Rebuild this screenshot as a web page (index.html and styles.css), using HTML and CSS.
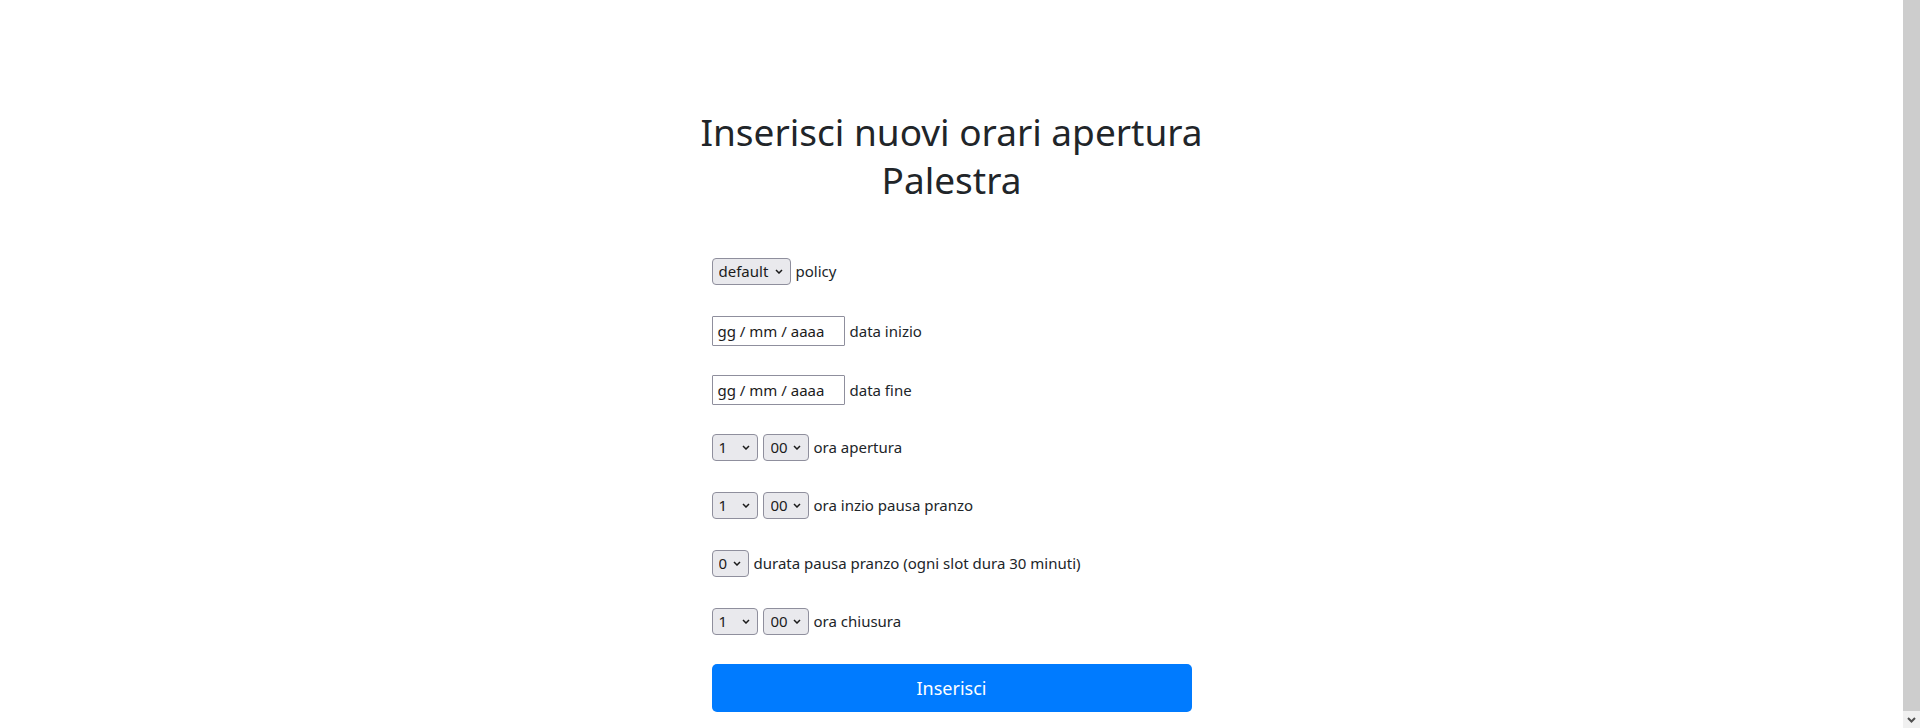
FILE: index.html
```html
<!DOCTYPE html>
<html lang="it">
<head>
<meta charset="utf-8">
<title>Inserisci nuovi orari apertura Palestra</title>
<link rel="stylesheet" href="styles.css">
</head>
<body>
<div class="page">
  <main class="wrap">
    <h1 class="title">Inserisci nuovi orari apertura<br>Palestra</h1>
    <form class="form">
      <div class="field f-policy">
        <span class="sel w-policy"><select><option>default</option></select><svg class="chev" viewBox="0 0 8 5"><path d="M1 1l3 3 3-3"/></svg></span>
        <label>policy</label>
      </div>
      <div class="field f-date1">
        <span class="date">gg / mm / aaaa</span>
        <label>data inizio</label>
      </div>
      <div class="field f-date2">
        <span class="date">gg / mm / aaaa</span>
        <label>data fine</label>
      </div>
      <div class="field f-time">
        <span class="sel w-h"><select><option>1</option></select><svg class="chev" viewBox="0 0 8 5"><path d="M1 1l3 3 3-3"/></svg></span>
        <span class="sel w-m"><select><option>00</option></select><svg class="chev" viewBox="0 0 8 5"><path d="M1 1l3 3 3-3"/></svg></span>
        <label>ora apertura</label>
      </div>
      <div class="field f-time">
        <span class="sel w-h"><select><option>1</option></select><svg class="chev" viewBox="0 0 8 5"><path d="M1 1l3 3 3-3"/></svg></span>
        <span class="sel w-m"><select><option>00</option></select><svg class="chev" viewBox="0 0 8 5"><path d="M1 1l3 3 3-3"/></svg></span>
        <label>ora inzio pausa pranzo</label>
      </div>
      <div class="field f-time">
        <span class="sel w-d"><select><option>0</option></select><svg class="chev" viewBox="0 0 8 5"><path d="M1 1l3 3 3-3"/></svg></span>
        <label>durata pausa pranzo (ogni slot dura 30 minuti)</label>
      </div>
      <div class="field f-time">
        <span class="sel w-h"><select><option>1</option></select><svg class="chev" viewBox="0 0 8 5"><path d="M1 1l3 3 3-3"/></svg></span>
        <span class="sel w-m"><select><option>00</option></select><svg class="chev" viewBox="0 0 8 5"><path d="M1 1l3 3 3-3"/></svg></span>
        <label>ora chiusura</label>
      </div>
      <button type="button" class="btn">Inserisci</button>
    </form>
  </main>
</div>
<div class="scrollbar">
  <div class="thumb"></div>
  <div class="arrow"><svg viewBox="0 0 9 6"><path d="M1 1l3.5 3.5L8 1"/></svg></div>
</div>
</body>
</html>
```
FILE: styles.css
```css
html, body {
  margin: 0;
  padding: 0;
  background: #fff;
  overflow: hidden;
}
body {
  font-family: "Noto Sans", "Open Sans", sans-serif;
  color: #212529;
  font-size: 15px;
  line-height: 1.5;
}
.page {
  width: calc(100% - 17px);
  height: 728px;
}
.wrap {
  width: 480px;
  margin: 0 auto;
  padding-top: 108px;
}
.title {
  margin: 0 -60px;
  font-size: 37px;
  font-weight: 400;
  line-height: 48px;
  text-align: center;
}
.form {
  margin-top: 52px;
  display: flex;
  flex-direction: column;
}
.field {
  height: 30px;
  display: flex;
  align-items: center;
  gap: 5px;
  margin-bottom: 28px;
}
.f-policy { margin-bottom: 30px; }
.f-date1 { margin-bottom: 29px; }
.f-date2 { margin-bottom: 27px; }
.field label {
  font-size: 15px;
  line-height: 24px;
}
.sel {
  position: relative;
  display: block;
  height: 27px;
}
.sel select {
  appearance: none;
  -webkit-appearance: none;
  box-sizing: border-box;
  width: 100%;
  height: 27px;
  margin: 0;
  padding: 0 0 0 6px;
  border: 1px solid #8f8f9d;
  border-radius: 4px;
  background: #e9e9ed;
  color: #1b1b1b;
  font: 15px "Noto Sans", sans-serif;
  line-height: 25px;
}
.chev {
  position: absolute;
  right: 8px;
  top: 11px;
  width: 8px;
  height: 5px;
  fill: none;
  stroke: #1b1b1b;
  stroke-width: 1.5;
}
.w-policy { width: 79px; }
.w-h { width: 46px; }
.w-m { width: 46px; }
.w-m select { padding-left: 7px; }
.w-d { width: 37px; }
.date {
  box-sizing: border-box;
  width: 133px;
  height: 30px;
  border: 1px solid #8f8f9d;
  border-radius: 1px;
  padding: 0 0 0 5px;
  line-height: 28px;
  color: #1b1b1b;
  font-size: 15px;
}
.btn {
  display: block;
  width: 100%;
  height: 48px;
  margin: 0;
  padding: 0;
  border: 0;
  border-radius: 5px;
  background: #007bff;
  color: #fff;
  font: 18px "Noto Sans", sans-serif;
  line-height: 48px;
  text-align: center;
}
.scrollbar {
  position: fixed;
  top: 0;
  right: 0;
  width: 17px;
  height: 728px;
  background: #f0f0f0;
  display: flex;
  flex-direction: column;
}
.thumb {
  flex: 1;
  background: #cdcdcd;
}
.arrow {
  height: 17px;
  display: flex;
  align-items: center;
  justify-content: center;
}
.arrow svg {
  width: 9px;
  height: 6px;
  fill: none;
  stroke: #505050;
  stroke-width: 2;
}
```
